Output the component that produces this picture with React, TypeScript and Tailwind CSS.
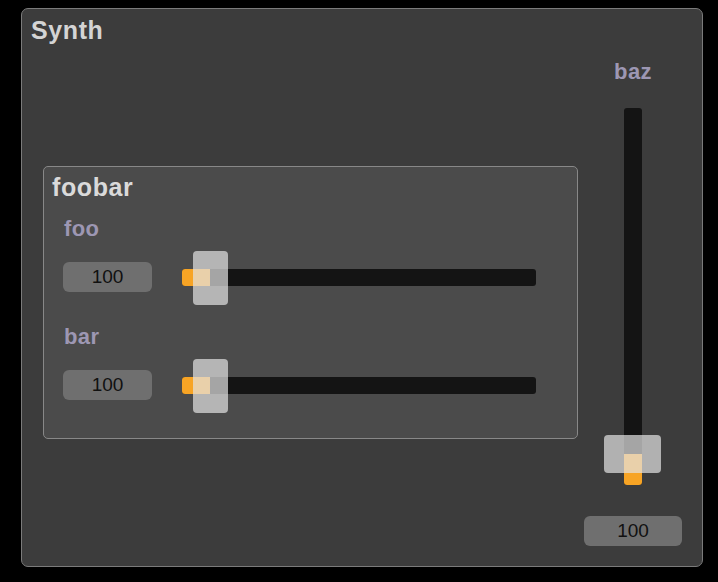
const font = { fontFamily: '"Liberation Sans", Arial, sans-serif' };

function HSlider() {
  return (
    <div className="flex items-center h-[54px]">
      <div className="ml-[19px] w-[89px] h-[30px] rounded-[6px] bg-[#6f6f6f] flex items-center justify-center text-[19px] text-[#111]">
        100
      </div>
      <div className="relative ml-[30px] w-[354px] h-[17px] rounded-[3px] bg-[#141414]">
        <div className="absolute left-0 top-0 h-full w-[28px] rounded-l-[3px] bg-[#f7a425]" />
        <div className="absolute left-[11px] top-[-18px] w-[35px] h-[54px] rounded-[4px] bg-[#e3e3e3]/70" />
      </div>
    </div>
  );
}

export default function App() {
  return (
    <div className="w-[718px] h-[582px] bg-black pt-[8px] pl-[21px]" style={font}>
      <div className="w-[682px] h-[559px] border border-[#7b7b7b] rounded-[7px] bg-[#3c3c3c] flex flex-col">
        <div className="pl-[9px] pt-[7px] text-[25px] leading-[28px] tracking-[0.6px] font-bold text-[#d4d4d4]">Synth</div>
        <div className="flex">
          {/* foobar group */}
          <div className="ml-[21px] mt-[122px] w-[535px] h-[273px] border border-[#888] rounded-[5px] bg-[#4b4b4b]">
            <div className="pl-[8px] pt-[6px] text-[25px] leading-[28px] tracking-[0.6px] font-bold text-[#dadada]">foobar</div>
            <div className="ml-[20px] mt-[16px] text-[22px] leading-[24px] tracking-[0.4px] font-bold text-[#9d97b3]">foo</div>
            <div className="mt-[9px]">
              <HSlider />
            </div>
            <div className="ml-[20px] mt-[21px] text-[22px] leading-[24px] tracking-[0.4px] font-bold text-[#9d97b3]">bar</div>
            <div className="mt-[9px]">
              <HSlider />
            </div>
          </div>

          {/* baz */}
          <div className="ml-[5px] w-[100px] flex flex-col items-center">
            <div className="mt-[16px] text-[22px] leading-[24px] tracking-[0.4px] font-bold text-[#9d97b3]">baz</div>
            <div className="relative mt-[24px] w-[18px] h-[377px] rounded-[3px] bg-[#141414]">
              <div className="absolute left-0 bottom-0 w-full h-[31px] rounded-b-[3px] bg-[#f7a425]" />
              <div className="absolute left-[-20px] top-[327px] w-[57px] h-[38px] rounded-[4px] bg-[#e3e3e3]/70" />
            </div>
            <div className="mt-[31px] w-[98px] h-[30px] rounded-[6px] bg-[#6f6f6f] flex items-center justify-center text-[19px] text-[#111]">
              100
            </div>
          </div>
        </div>
      </div>
    </div>
  );
}
